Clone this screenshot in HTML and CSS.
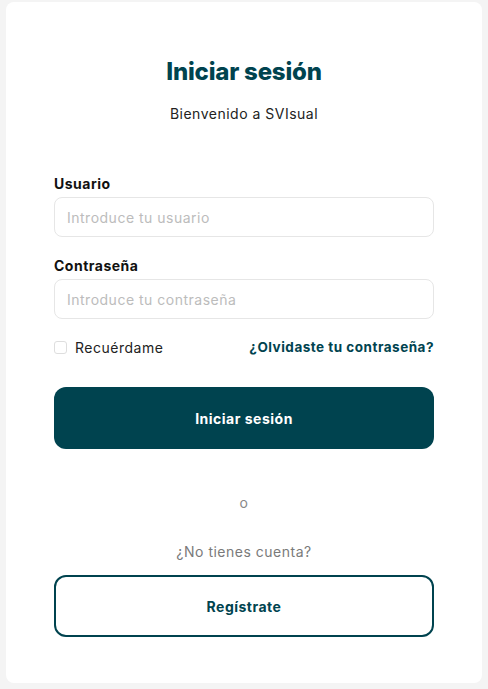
FILE: index.html
```html
<!DOCTYPE html>
<html lang="es">
<head>
    <meta charset="UTF-8">
    <meta name="viewport" content="width=device-width, initial-scale=1.0">
    <title>Iniciar sesión - SVIsual</title>
    <link rel="stylesheet" href="styles.css">
</head>
<body>
    <div class="login-card">
        <h1 class="title">Iniciar sesión</h1>
        <p class="subtitle">Bienvenido a SVIsual</p>

        <form class="login-form">
            <label for="usuario" class="field-label">Usuario</label>
            <input type="text" id="usuario" class="field-input" placeholder="Introduce tu usuario">

            <label for="password" class="field-label">Contraseña</label>
            <input type="password" id="password" class="field-input" placeholder="Introduce tu contraseña">

            <div class="options-row">
                <label class="remember">
                    <input type="checkbox" class="remember-box">
                    <span>Recuérdame</span>
                </label>
                <a href="#" class="forgot-link">¿Olvidaste tu contraseña?</a>
            </div>

            <button type="submit" class="primary-button">Iniciar sesión</button>
        </form>

        <p class="divider">o</p>
        <p class="no-account">¿No tienes cuenta?</p>
        <a href="#" class="register-button">Regístrate</a>
    </div>
</body>
</html>
```

FILE: styles.css
```css
body {
    font-family: 'Inter', 'Noto Sans', sans-serif;
    letter-spacing: 0.5px;
    margin: 0;
    padding: 2px 6px 6px;
    background-color: #f4f4f4;
}
.login-card {
    background-color: #fff;
    border-radius: 8px;
    padding: 54px 48px 46px;
}
.title {
    margin: 0;
    text-align: center;
    font-size: 24px;
    line-height: 32px;
    font-weight: 800;
    letter-spacing: -0.2px;
    color: #00434f;
}
.subtitle {
    margin: 16px 0 0;
    text-align: center;
    font-size: 14px;
    line-height: 20px;
    color: #222;
}
.login-form {
    margin-top: 50px;
    display: flex;
    flex-direction: column;
}
.field-label {
    font-size: 14px;
    line-height: 20px;
    font-weight: 700;
    color: #111;
    margin-bottom: 3px;
}
.field-input {
    height: 40px;
    box-sizing: border-box;
    border: 1px solid #e6e6e6;
    border-radius: 8px;
    padding: 0 12px;
    font-family: inherit;
    font-size: 14px;
    letter-spacing: 0.5px;
    margin-bottom: 19px;
}
.field-input::placeholder {
    color: #bcbcbc;
}
.options-row {
    display: flex;
    justify-content: space-between;
    align-items: center;
    height: 20px;
    margin-top: -1px;
    margin-bottom: 30px;
}
.remember {
    display: flex;
    align-items: center;
    gap: 8px;
    font-size: 14px;
    color: #222;
}
.remember-box {
    appearance: none;
    width: 13px;
    height: 13px;
    margin: 0;
    border: 1px solid #dedede;
    border-radius: 3px;
}
.forgot-link {
    font-size: 13.5px;
    font-weight: 700;
    color: #00434f;
    text-decoration: none;
}
.primary-button {
    height: 62px;
    border: none;
    border-radius: 12px;
    background-color: #00434f;
    color: #fff;
    font-family: inherit;
    font-size: 14px;
    font-weight: 700;
    letter-spacing: 0.5px;
}
.divider {
    margin: 44px 0 0;
    text-align: center;
    font-size: 14px;
    line-height: 20px;
    color: #888;
}
.no-account {
    margin: 29px 0 13px;
    text-align: center;
    font-size: 14px;
    line-height: 20px;
    color: #7a7a7a;
}
.register-button {
    display: flex;
    align-items: center;
    justify-content: center;
    height: 62px;
    box-sizing: border-box;
    border: 2px solid #00434f;
    border-radius: 12px;
    color: #00434f;
    font-size: 14px;
    font-weight: 700;
    text-decoration: none;
}
```
